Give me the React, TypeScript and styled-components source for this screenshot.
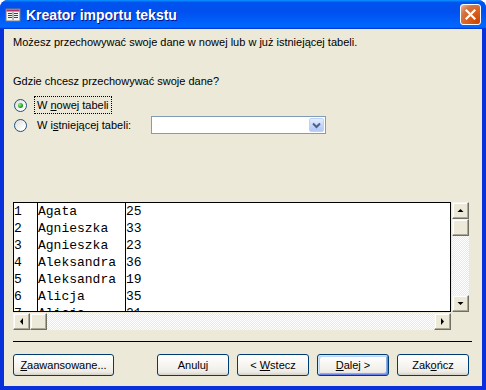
import React from 'react';
import styled, { createGlobalStyle } from 'styled-components';

const GlobalStyle = createGlobalStyle`
  html, body {
    margin: 0;
    padding: 0;
    background: #ffffff;
  }
  body {
    font-family: 'Liberation Sans', Arial, sans-serif;
    font-size: 11px;
  }
`;

const Window = styled.div`
  width: 486px;
  height: 390px;
  box-sizing: border-box;
  display: flex;
  flex-direction: column;
  background: #0831d9;
  border-radius: 8px 8px 0 0;
  overflow: hidden;
`;

const TitleBar = styled.div`
  height: 29px;
  flex: none;
  display: flex;
  align-items: center;
  padding: 0 5px 0 5px;
  background: linear-gradient(
    to bottom,
    #0997ff 0%,
    #0053ee 8%,
    #0050ee 40%,
    #0066ff 88%,
    #0066ff 93%,
    #005bff 95%,
    #003dd7 96%,
    #003dd7 100%
  );
`;

const TitleText = styled.div`
  flex: 1;
  margin-left: 5px;
  color: #ffffff;
  font-family: 'Liberation Sans', Arial, sans-serif;
  font-weight: bold;
  font-size: 14px;
  text-shadow: 1px 1px #0f1089;
`;

const CloseButton = styled.div`
  width: 21px;
  height: 21px;
  box-sizing: border-box;
  border: 1px solid #ffffff;
  border-radius: 3px;
  background: radial-gradient(
    circle at 90% 90%,
    #cc4600 0%,
    #dc6527 55%,
    #cd7546 70%,
    #e5a07a 90%,
    #fbe0cf 100%
  );
  display: flex;
  align-items: center;
  justify-content: center;
`;

const Frame = styled.div`
  flex: 1;
  display: flex;
  flex-direction: column;
  margin: 0 4px 4px 4px;
  background: #ece9d8;
  padding: 6px 9px 0 9px;
`;

const Intro = styled.div`
  height: 14px;
  line-height: 14px;
  color: #000;
`;

const Question = styled.div`
  margin-top: 25px;
  height: 14px;
  line-height: 14px;
  color: #000;
`;

const OptionRow = styled.div<{ $first?: boolean }>`
  display: flex;
  align-items: center;
  height: 20px;
  margin-top: ${({ $first }) => ($first ? '7px' : '0')};
`;

const Radio = styled.div<{ $checked?: boolean }>`
  width: 13px;
  height: 13px;
  box-sizing: border-box;
  border-radius: 50%;
  border: 1px solid #1c5180;
  background: linear-gradient(135deg, #dcdcd7 0%, #ffffff 80%);
  margin-left: 1px;
  display: flex;
  align-items: center;
  justify-content: center;

  &::after {
    content: '';
    display: ${({ $checked }) => ($checked ? 'block' : 'none')};
    width: 5px;
    height: 5px;
    border-radius: 50%;
    background: radial-gradient(circle at 35% 35%, #8ef08e 0%, #21a121 60%, #1a841a 100%);
  }
`;

const OptionLabel = styled.span<{ $focused?: boolean }>`
  margin-left: 8px;
  padding: 1px 2px;
  line-height: 14px;
  outline: ${({ $focused }) => ($focused ? '1px dotted #000' : 'none')};
  outline-offset: 0;
  color: #000;
`;

const Combo = styled.div`
  width: 175px;
  height: 18px;
  box-sizing: border-box;
  border: 1px solid #7f9db9;
  background: #fff;
  display: flex;
  justify-content: flex-end;
  padding: 1px;
  margin-left: 18px;
`;

const ComboButton = styled.div`
  width: 15px;
  height: 14px;
  box-sizing: border-box;
  border: 1px solid #bad1fc;
  border-radius: 2px;
  background: linear-gradient(to bottom, #e6eefc 0%, #c1d3fb 60%, #b4c8f7 100%);
  display: flex;
  align-items: center;
  justify-content: center;
`;

const DataArea = styled.div`
  margin-top: 67px;
  display: grid;
  grid-template-columns: 438px 17px;
  grid-template-rows: 110px 17px;
  column-gap: 1px;
  row-gap: 1px;
`;

const Sheet = styled.div`
  box-sizing: border-box;
  border: 1px solid #000;
  background: #fff;
  display: flex;
  overflow: hidden;
`;

const Column = styled.div<{ $w: number; $last?: boolean }>`
  width: ${({ $w }) => $w}px;
  flex: ${({ $last }) => ($last ? '1' : 'none')};
  box-sizing: border-box;
  border-right: ${({ $last }) => ($last ? 'none' : '1px solid #000')};
`;

const Cell = styled.div`
  height: 17px;
  line-height: 17px;
  font-family: 'Liberation Mono', 'Courier New', monospace;
  font-size: 13px;
  color: #000;
  white-space: nowrap;
`;

const Track = styled.div<{ $vertical?: boolean }>`
  display: flex;
  flex-direction: ${({ $vertical }) => ($vertical ? 'column' : 'row')};
  background-color: #fcfcfa;
  background-image: repeating-conic-gradient(#ece9d8 0% 25%, #ffffff 0% 50%);
  background-size: 2px 2px;
`;

const ScrollButton = styled.div`
  width: 17px;
  height: 17px;
  flex: none;
  box-sizing: border-box;
  background: #ece9d8;
  border-top: 1px solid #f5f4ee;
  border-left: 1px solid #f5f4ee;
  border-right: 1px solid #716f64;
  border-bottom: 1px solid #716f64;
  box-shadow: inset -1px -1px #aca899, inset 1px 1px #ffffff;
  display: flex;
  align-items: center;
  justify-content: center;
`;

const Spacer = styled.div`
  flex: 1;
`;

const Separator = styled.div`
  margin-top: 11px;
  height: 1px;
  width: 459px;
  background: #000;
`;

const ButtonRow = styled.div`
  display: flex;
  align-items: center;
  margin-top: 12px;
  gap: 8px;
`;

const Button = styled.div<{ $w?: number; $default?: boolean; $push?: number }>`
  width: ${({ $w }) => $w ?? 72}px;
  height: 22px;
  box-sizing: border-box;
  border: 1px solid #003c74;
  border-radius: 3px;
  background: linear-gradient(to bottom, #ffffff 0%, #f4f3ee 60%, #ecebe6 85%, #d6d0c5 100%);
  box-shadow: ${({ $default }) =>
    $default
      ? 'inset 1px 1px #cee7ff, inset -1px -1px #6982ee, inset 2px 2px #bcd4f6, inset -2px -2px #89ade4'
      : 'none'};
  display: flex;
  align-items: center;
  justify-content: center;
  color: #000;
  margin-left: ${({ $push }) => $push ?? 0}px;
`;

const U = styled.span`
  text-decoration: underline;
`;

const TitleIcon = () => (
  <svg width="16" height="16" viewBox="0 0 16 16">
    <rect x="1" y="2" width="14" height="12" fill="#f4f4f4" stroke="#7a7a7a" />
    <rect x="1.5" y="2.5" width="13" height="2" fill="#b03060" />
    <rect x="3" y="6" width="4" height="1" fill="#444" />
    <rect x="3" y="8" width="4" height="1" fill="#444" />
    <rect x="3" y="10" width="4" height="1" fill="#444" />
    <rect x="9" y="6" width="4" height="1" fill="#444" />
    <rect x="9" y="8" width="4" height="1" fill="#444" />
    <rect x="9" y="10" width="4" height="1" fill="#444" />
    <line x1="8" y1="5" x2="8" y2="13" stroke="#7a7a7a" />
  </svg>
);

const CloseGlyph = () => (
  <svg width="11" height="11" viewBox="0 0 11 11">
    <path d="M1.5 1.5 L9.5 9.5 M9.5 1.5 L1.5 9.5" stroke="#ffffff" strokeWidth="2.2" strokeLinecap="square" />
  </svg>
);

const Arrow = ({ dir }: { dir: 'up' | 'down' | 'left' | 'right' }) => {
  const d = {
    up: 'M0.5 4 L3.5 1 L6.5 4 Z',
    down: 'M0.5 1 L3.5 4 L6.5 1 Z',
    left: 'M4 0 L1 3.5 L4 7 Z',
    right: 'M1 0 L4 3.5 L1 7 Z'
  }[dir];
  const vertical = dir === 'up' || dir === 'down';
  return (
    <svg width={vertical ? 7 : 5} height={vertical ? 5 : 7} viewBox={vertical ? '0 0 7 5' : '0 0 5 7'}>
      <path d={d} fill="#000" />
    </svg>
  );
};

const rows = [
  ['1', 'Agata', '25'],
  ['2', 'Agnieszka', '33'],
  ['3', 'Agnieszka', '23'],
  ['4', 'Aleksandra', '36'],
  ['5', 'Aleksandra', '19'],
  ['6', 'Alicja', '35'],
  ['7', 'Alicja', '21']
];

export default function App() {
  return (
    <>
      <GlobalStyle />
      <Window>
        <TitleBar>
          <TitleIcon />
          <TitleText>Kreator importu tekstu</TitleText>
          <CloseButton>
            <CloseGlyph />
          </CloseButton>
        </TitleBar>
        <Frame>
          <Intro>Możesz przechowywać swoje dane w nowej lub w już istniejącej tabeli.</Intro>
          <Question>Gdzie chcesz przechowywać swoje dane?</Question>
          <OptionRow $first>
            <Radio $checked />
            <OptionLabel $focused>
              W <U>n</U>owej tabeli
            </OptionLabel>
          </OptionRow>
          <OptionRow>
            <Radio />
            <OptionLabel>
              W i<U>s</U>tniejącej tabeli:
            </OptionLabel>
            <Combo>
              <ComboButton>
                <svg width="9" height="7" viewBox="0 0 9 7">
                  <path d="M1 1.5 L4.5 5 L8 1.5" stroke="#4d6185" strokeWidth="2" fill="none" />
                </svg>
              </ComboButton>
            </Combo>
          </OptionRow>

          <DataArea>
            <Sheet>
              <Column $w={24}>
                {rows.map((r) => (
                  <Cell key={r[0]}>{r[0]}</Cell>
                ))}
              </Column>
              <Column $w={88}>
                {rows.map((r) => (
                  <Cell key={r[0]}>{r[1]}</Cell>
                ))}
              </Column>
              <Column $w={100} $last>
                {rows.map((r) => (
                  <Cell key={r[0]}>{r[2]}</Cell>
                ))}
              </Column>
            </Sheet>
            <Track $vertical>
              <ScrollButton>
                <Arrow dir="up" />
              </ScrollButton>
              <ScrollButton />
              <Spacer />
              <ScrollButton>
                <Arrow dir="down" />
              </ScrollButton>
            </Track>
            <Track>
              <ScrollButton>
                <Arrow dir="left" />
              </ScrollButton>
              <ScrollButton />
              <Spacer />
              <ScrollButton>
                <Arrow dir="right" />
              </ScrollButton>
            </Track>
          </DataArea>

          <Separator />

          <ButtonRow>
            <Button $w={101}>
              <span>
                <U>Z</U>aawansowane...
              </span>
            </Button>
            <Button $push={35}>Anuluj</Button>
            <Button>
              <span>
                &lt; <U>W</U>stecz
              </span>
            </Button>
            <Button $default>
              <span>
                <U>D</U>alej &gt;
              </span>
            </Button>
            <Button>
              <span>
                Zak<U>o</U>ńcz
              </span>
            </Button>
          </ButtonRow>
        </Frame>
      </Window>
    </>
  );
}
